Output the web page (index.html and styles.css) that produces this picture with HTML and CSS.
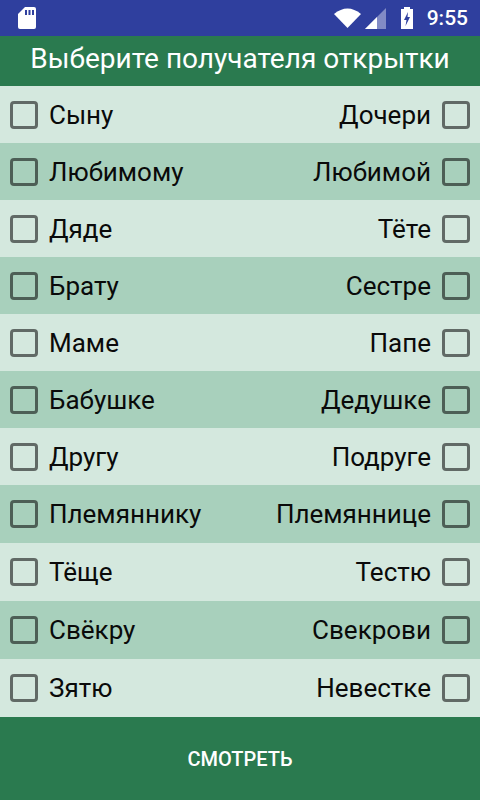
FILE: index.html
```html
<!DOCTYPE html>
<html>

<head>
    <title>Открытки</title>
    <meta charset="utf-8">
    <meta name="viewport" content="width=device-width, initial-scale=1.0">
    <link rel="stylesheet" href="styles.css">
</head>

<body>
    <div class="status">
        <svg class="sd" width="18" height="22" viewBox="0 0 18 22">
            <path d="M7 0H16a2 2 0 0 1 2 2V20a2 2 0 0 1-2 2H2a2 2 0 0 1-2-2V7Z" fill="#fff"/>
            <path d="M7 3h2v5H7ZM10.500 3h2v5h-2ZM14 3h2v5h-2Z" fill="#2f3f9e"/>
        </svg>
        <div class="status-right">
            <svg width="27" height="20" viewBox="0 0 27 20">
                <path d="M0 6Q13.500 -5 27 6L13.500 20Z" fill="#fff"/>
            </svg>
            <svg class="signal" width="21" height="21" viewBox="0 0 21 21">
                <path d="M0 21L21 0V21Z" fill="#fff" opacity=".4"/>
                <path d="M0 21L12 9V21Z" fill="#fff"/>
            </svg>
            <svg class="battery" width="12" height="22" viewBox="0 0 12 22">
                <path d="M3 2V0H9V2H12V22H0V2Z" fill="#fff"/>
                <path d="M7 5L3 13H5.500L4.500 19L9 10H6.500Z" fill="#2f3f9e"/>
            </svg>
            <span class="time">9:55</span>
        </div>
    </div>

    <h1>Выберите получателя открытки</h1>

    <section class="list">
        <div class="row"><label><i class="box"></i>Сыну</label><label>Дочери<i class="box"></i></label></div>
        <div class="row dark"><label><i class="box"></i>Любимому</label><label>Любимой<i class="box"></i></label></div>
        <div class="row"><label><i class="box"></i>Дяде</label><label>Тёте<i class="box"></i></label></div>
        <div class="row dark"><label><i class="box"></i>Брату</label><label>Сестре<i class="box"></i></label></div>
        <div class="row"><label><i class="box"></i>Маме</label><label>Папе<i class="box"></i></label></div>
        <div class="row dark"><label><i class="box"></i>Бабушке</label><label>Дедушке<i class="box"></i></label></div>
        <div class="row"><label><i class="box"></i>Другу</label><label>Подруге<i class="box"></i></label></div>
        <div class="row dark tall"><label><i class="box"></i>Племяннику</label><label>Племяннице<i class="box"></i></label></div>
        <div class="row tall"><label><i class="box"></i>Тёще</label><label>Тестю<i class="box"></i></label></div>
        <div class="row dark tall"><label><i class="box"></i>Свёкру</label><label>Свекрови<i class="box"></i></label></div>
        <div class="row tall"><label><i class="box"></i>Зятю</label><label>Невестке<i class="box"></i></label></div>
    </section>

    <button class="show">СМОТРЕТЬ</button>
</body>

</html>
```

FILE: styles.css
```css
* {
    box-sizing: border-box;
}

body {
    margin: 0;
    width: 480px;
    height: 800px;
    display: flex;
    flex-direction: column;
    font-family: Roboto, sans-serif;
    overflow: hidden;
}

.status {
    height: 36px;
    background-color: #2f3f9e;
    display: flex;
    align-items: center;
    justify-content: space-between;
    padding: 0 12px 0 18px;
    color: white;
}

.status-right {
    display: flex;
    align-items: center;
}

.signal {
    margin-left: 4px;
}

.battery {
    margin-left: 15px;
}

.time {
    margin-left: 14px;
    font-size: 21px;
    font-weight: 500;
}

h1 {
    margin: 0;
    height: 50px;
    background-color: #2a7a4f;
    color: white;
    font-size: 28px;
    font-weight: 400;
    line-height: 46px;
    text-align: center;
}

.row {
    height: 57px;
    background-color: #d4e8de;
    display: flex;
    align-items: center;
    justify-content: space-between;
    padding: 0 10px;
    font-size: 26px;
    color: #0a0a0a;
}

.row.tall {
    height: 58px;
}

.dark {
    background-color: #a8d0bc;
}

label {
    display: flex;
    align-items: center;
    gap: 11px;
}

.box {
    width: 28px;
    height: 28px;
    border: 3px solid rgba(0, 0, 0, 0.54);
    border-radius: 4px;
}

.show {
    flex: 1;
    border: 0;
    background-color: #2a7a4f;
    color: white;
    font-family: Roboto, sans-serif;
    font-size: 20px;
    font-weight: 500;
}
```
